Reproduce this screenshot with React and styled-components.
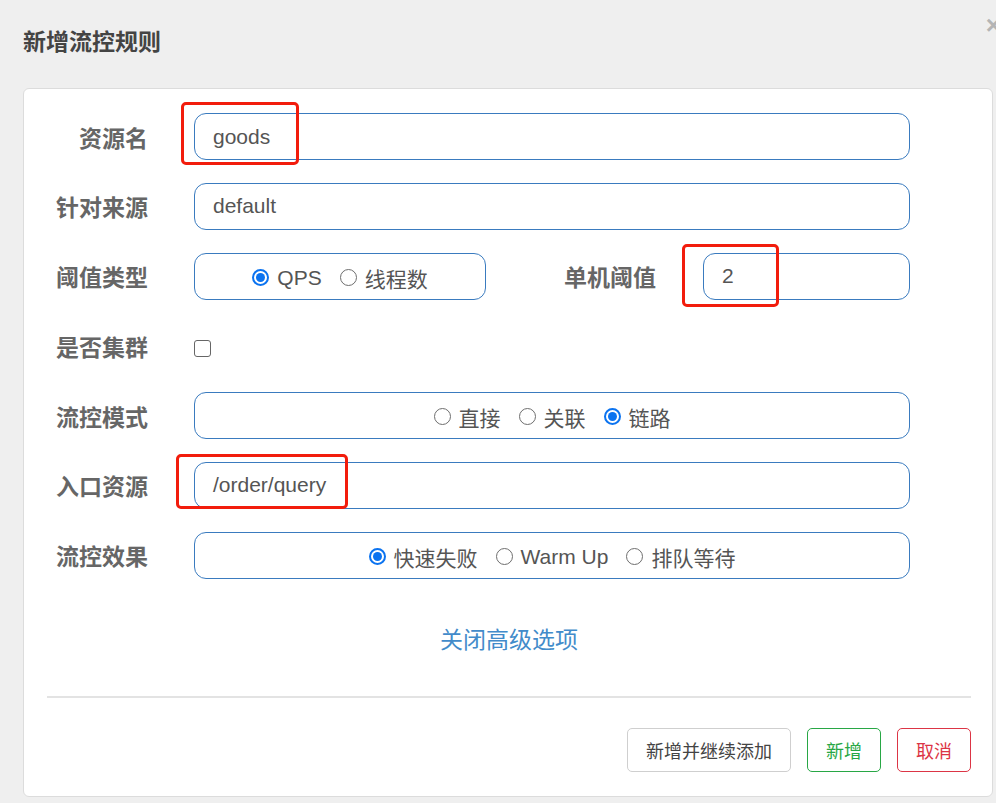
import styled, { createGlobalStyle } from "styled-components";

const GlobalStyle = createGlobalStyle`
body {
  margin: 0;
  background: #efefef;
  font-family: "Liberation Sans", "Noto Sans CJK SC", sans-serif;
}
`

const Modal = styled.div`
position: relative;
width: 996px;
height: 803px;
overflow: hidden;
`
const Header = styled.div`
height: 88px;
display: flex;
align-items: center;
padding-left: 23px;
box-sizing: border-box;
`
const Title = styled.h4`
margin: 0;
margin-top: -8px;
font-size: 23px;
font-weight: bold;
color: #444;
`
const Close = styled.span`
position: absolute;
top: 10px;
right: -5px;
font-size: 26px;
font-weight: bold;
color: #b5b5b5;
`
const Card = styled.div`
margin: 0 3px 0 23px;
height: 709px;
background: #fff;
border: 1px solid #dcdcdc;
border-radius: 6px;
box-sizing: border-box;
padding: 24px 21px 0 23px;
`
const Form = styled.div`
display: flex;
flex-direction: column;
gap: 22.8px;
padding-right: 61px;
`
const Row = styled.div`
display: grid;
grid-template-columns: 101px 1fr;
column-gap: 46px;
align-items: center;
min-height: 47px;
`
const SplitRow = styled.div`
display: grid;
grid-template-columns: 292px 1fr 207px;
column-gap: 47px;
align-items: center;
`
const Label = styled.label`
text-align: right;
font-size: 23px;
font-weight: bold;
color: #666;
white-space: nowrap;
`
const Field = styled.div`
position: relative;
`
const Input = styled.div`
height: 47px;
box-sizing: border-box;
border: 1px solid #3a7bbf;
border-radius: 12px;
display: flex;
align-items: center;
padding-left: 18px;
font-size: 21px;
color: #555;
`
const RadioBox = styled.div`
height: 47px;
box-sizing: border-box;
border: 1px solid #3a7bbf;
border-radius: 12px;
display: flex;
align-items: center;
justify-content: center;
gap: 18px;
font-size: 21px;
color: #555;
padding-top: 3px;
`
const RadioItem = styled.span`
display: flex;
align-items: center;
gap: 8px;
`
const Dot = styled.span`
width: 17px;
height: 17px;
box-sizing: border-box;
border-radius: 50%;
border: ${(props) => props.checked ? "2px solid #0b73f0" : "1.5px solid #6e6e6e"};
display: flex;
align-items: center;
justify-content: center;
margin-top: -1px;
&::after {
  content: "";
  width: 9px;
  height: 9px;
  border-radius: 50%;
  background: ${(props) => props.checked ? "#0b73f0" : "transparent"};
}
`
const Checkbox = styled.span`
display: block;
width: 17px;
height: 17px;
box-sizing: border-box;
border: 1.5px solid #666;
border-radius: 3px;
margin-top: 5px;
`
const Highlight = styled.span`
position: absolute;
pointer-events: none;
border: 3px solid #f21c0c;
border-radius: 5px;
box-sizing: border-box;
left: ${(props) => props.left}px;
top: ${(props) => props.top}px;
width: ${(props) => props.w}px;
height: ${(props) => props.h}px;
`
const Toggle = styled.div`
text-align: center;
font-size: 23px;
color: #428bca;
margin-top: 46px;
line-height: 30px;
`
const Divider = styled.hr`
margin: 41px 0 0 0;
border: none;
border-top: 2px solid #e3e3e3;
`
const Footer = styled.div`
display: flex;
justify-content: flex-end;
gap: 16px;
margin-top: 30px;
`
const Button = styled.button`
height: 44px;
padding: 0 18px;
font-family: "Liberation Sans", "Noto Sans CJK SC", sans-serif;
font-size: 18px;
background: #fff;
border-radius: 5px;
border: 1px solid ${(props) => props.tone || "#cfcfcf"};
color: ${(props) => props.tone || "#444"};
`

const Radio = ({ checked, children }) => (
  <RadioItem>
    <Dot checked={checked} />
    {children}
  </RadioItem>
)

export default function App() {
  return (
    <Modal>
      <GlobalStyle />
      <Header>
        <Title>新增流控规则</Title>
      </Header>
      <Close>×</Close>
      <Card>
        <Form>
          <Row>
            <Label>资源名</Label>
            <Field>
              <Input>goods</Input>
              <Highlight left={-13} top={-11} w={118} h={63} />
            </Field>
          </Row>
          <Row>
            <Label>针对来源</Label>
            <Input>default</Input>
          </Row>
          <Row>
            <Label>阈值类型</Label>
            <SplitRow>
              <RadioBox>
                <Radio checked>QPS</Radio>
                <Radio>线程数</Radio>
              </RadioBox>
              <Label>单机阈值</Label>
              <Field>
                <Input>2</Input>
                <Highlight left={-21} top={-9} w={97} h={63} />
              </Field>
            </SplitRow>
          </Row>
          <Row>
            <Label>是否集群</Label>
            <Checkbox />
          </Row>
          <Row>
            <Label>流控模式</Label>
            <RadioBox>
              <Radio>直接</Radio>
              <Radio>关联</Radio>
              <Radio checked>链路</Radio>
            </RadioBox>
          </Row>
          <Row>
            <Label>入口资源</Label>
            <Field>
              <Input>/order/query</Input>
              <Highlight left={-18} top={-8} w={172} h={55} />
            </Field>
          </Row>
          <Row>
            <Label>流控效果</Label>
            <RadioBox>
              <Radio checked>快速失败</Radio>
              <Radio>Warm Up</Radio>
              <Radio>排队等待</Radio>
            </RadioBox>
          </Row>
        </Form>
        <Toggle>关闭高级选项</Toggle>
        <Divider />
        <Footer>
          <Button>新增并继续添加</Button>
          <Button tone="#28a745">新增</Button>
          <Button tone="#dc3545">取消</Button>
        </Footer>
      </Card>
    </Modal>
  )
}
